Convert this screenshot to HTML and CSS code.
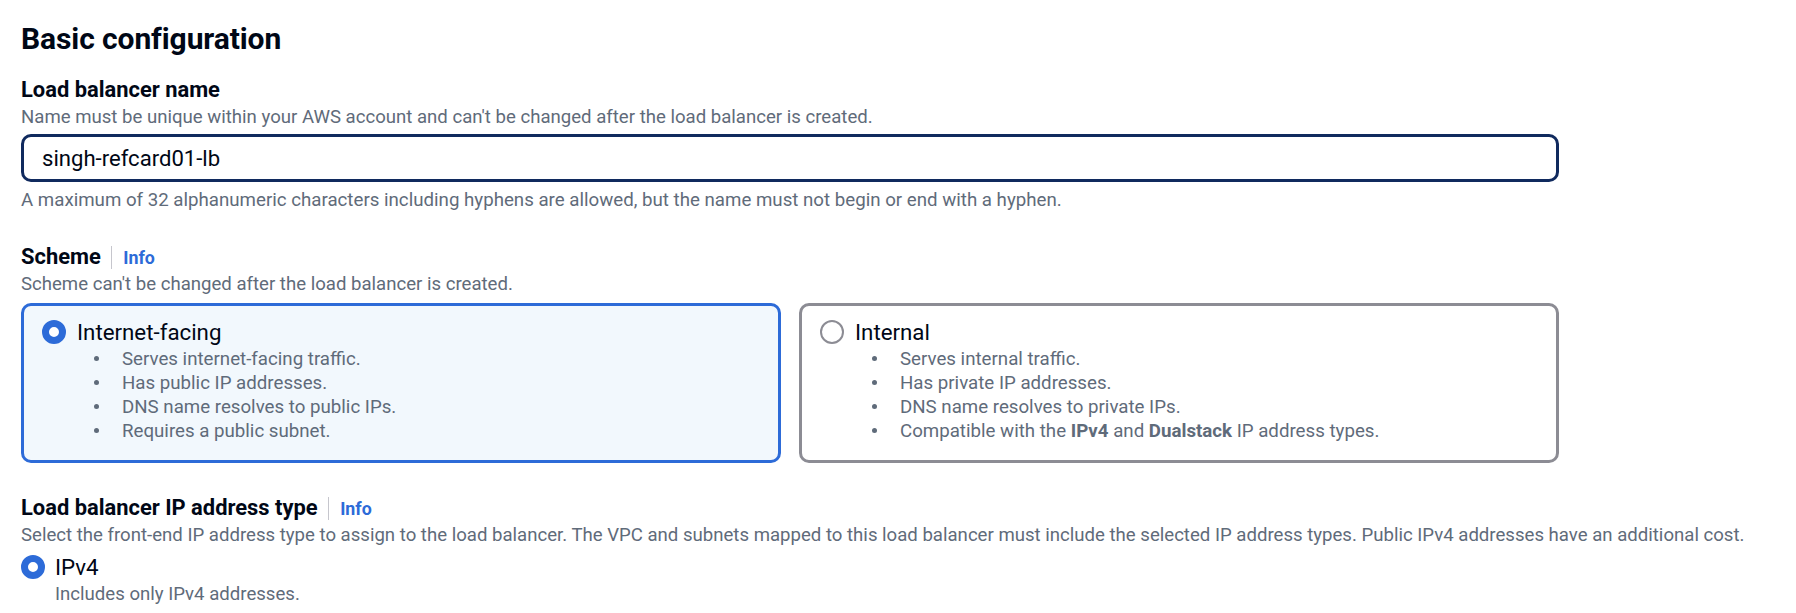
FILE: index.html
```html
<!DOCTYPE html>
<html lang="en">
<head>
<meta charset="utf-8">
<title>Basic configuration</title>
<link rel="stylesheet" href="styles.css">
</head>
<body>
<div class="page">
  <h2 class="title">Basic configuration</h2>

  <div class="field">
    <div class="label-row"><span class="label">Load balancer name</span></div>
    <div class="desc">Name must be unique within your AWS account and can't be changed after the load balancer is created.</div>
    <div class="input">singh-refcard01-lb</div>
    <div class="constraint">A maximum of 32 alphanumeric characters including hyphens are allowed, but the name must not begin or end with a hyphen.</div>
  </div>

  <div class="field section">
    <div class="label-row"><span class="label">Scheme</span><span class="sep"></span><a class="info" href="#">Info</a></div>
    <div class="desc">Scheme can't be changed after the load balancer is created.</div>
    <div class="tiles">
      <div class="tile tile-selected">
        <div class="radio-wrap"><span class="radio radio-checked"></span></div>
        <div class="tile-body">
          <div class="radio-label">Internet-facing</div>
          <ul class="bullets">
            <li>Serves internet-facing traffic.</li>
            <li>Has public IP addresses.</li>
            <li>DNS name resolves to public IPs.</li>
            <li>Requires a public subnet.</li>
          </ul>
        </div>
      </div>
      <div class="tile">
        <div class="radio-wrap"><span class="radio"></span></div>
        <div class="tile-body">
          <div class="radio-label">Internal</div>
          <ul class="bullets">
            <li>Serves internal traffic.</li>
            <li>Has private IP addresses.</li>
            <li>DNS name resolves to private IPs.</li>
            <li><span>Compatible with the <b>IPv4</b> and <b>Dualstack</b> IP address types.</span></li>
          </ul>
        </div>
      </div>
    </div>
  </div>

  <div class="field section">
    <div class="label-row"><span class="label">Load balancer IP address type</span><span class="sep"></span><a class="info" href="#">Info</a></div>
    <div class="desc">Select the front-end IP address type to assign to the load balancer. The VPC and subnets mapped to this load balancer must include the selected IP address types. Public IPv4 addresses have an additional cost.</div>
    <div class="option">
      <div class="radio-wrap"><span class="radio radio-checked"></span></div>
      <div class="option-body">
        <div class="radio-label">IPv4</div>
        <div class="desc">Includes only IPv4 addresses.</div>
      </div>
    </div>
  </div>
</div>
</body>
</html>
```
FILE: styles.css
```css
html, body {
  margin: 0;
  padding: 0;
  background: #ffffff;
}

body {
  font-family: Roboto, "Noto Sans", sans-serif;
  color: #000716;
}

.page {
  padding: 21px 0 0 21px;
  width: 1760px;
}

.title {
  margin: 0;
  font-size: 30px;
  line-height: 36px;
  font-weight: 700;
  color: #000716;
  letter-spacing: -0.1px;
}

.field {
  margin-top: 18px;
}

.section {
  margin-top: 30px;
}

.label-row {
  display: flex;
  align-items: baseline;
  height: 30px;
}

.label {
  font-size: 21.9px;
  line-height: 30px;
  font-weight: 700;
  color: #000716;
}

.sep {
  align-self: center;
  width: 1.5px;
  height: 23px;
  background: #c6c6cd;
  margin: 0 11px 0 10px;
}

.info {
  font-size: 17.8px;
  line-height: 30px;
  font-weight: 700;
  color: #2d6bd8;
  text-decoration: none;
}

.desc {
  font-size: 18.6px;
  line-height: 24px;
  color: #5f6b7a;
  white-space: nowrap;
}

.input {
  box-sizing: border-box;
  width: 1538px;
  height: 48px;
  margin-top: 5px;
  border: 3px solid #102a5e;
  border-radius: 10px;
  padding: 0 18px;
  font-size: 22.1px;
  line-height: 42px;
  color: #000716;
}

.constraint {
  margin-top: 6px;
  font-size: 18.7px;
  line-height: 24px;
  color: #5f6b7a;
  white-space: nowrap;
}

.tiles {
  display: grid;
  grid-template-columns: 1fr 1fr;
  column-gap: 18px;
  width: 1538px;
  margin-top: 7px;
}

.tile {
  box-sizing: border-box;
  display: flex;
  height: 160px;
  border: 3px solid #8c8c94;
  border-radius: 10px;
  padding: 10.5px 18px 0 18px;
  background: #ffffff;
}

.tile-selected {
  border-color: #2d6bd8;
  background: #f2f8fd;
}

.radio-wrap {
  height: 30px;
  display: flex;
  align-items: center;
  flex: none;
}

.radio {
  box-sizing: border-box;
  display: block;
  width: 24px;
  height: 24px;
  border-radius: 50%;
  border: 2.5px solid #8c8c94;
  background: #ffffff;
}

.radio-checked {
  border: 7px solid #2d6bd8;
}

.tile-body {
  margin-left: 11px;
}

.radio-label {
  font-size: 22.3px;
  line-height: 30px;
  color: #000716;
}

.bullets {
  list-style: none;
  margin: 0 0 0 17px;
  padding: 0;
}

.bullets li {
  display: flex;
  align-items: center;
  font-size: 18.7px;
  line-height: 24px;
  color: #5f6b7a;
  white-space: nowrap;
}

.bullets li::before {
  content: "";
  flex: none;
  width: 5px;
  height: 5px;
  border-radius: 50%;
  background: #5f6b7a;
  margin-right: 23px;
}

.bullets b {
  font-weight: 700;
}

.option {
  display: flex;
  margin-top: 5px;
}

.option-body {
  margin-left: 10px;
}
```
